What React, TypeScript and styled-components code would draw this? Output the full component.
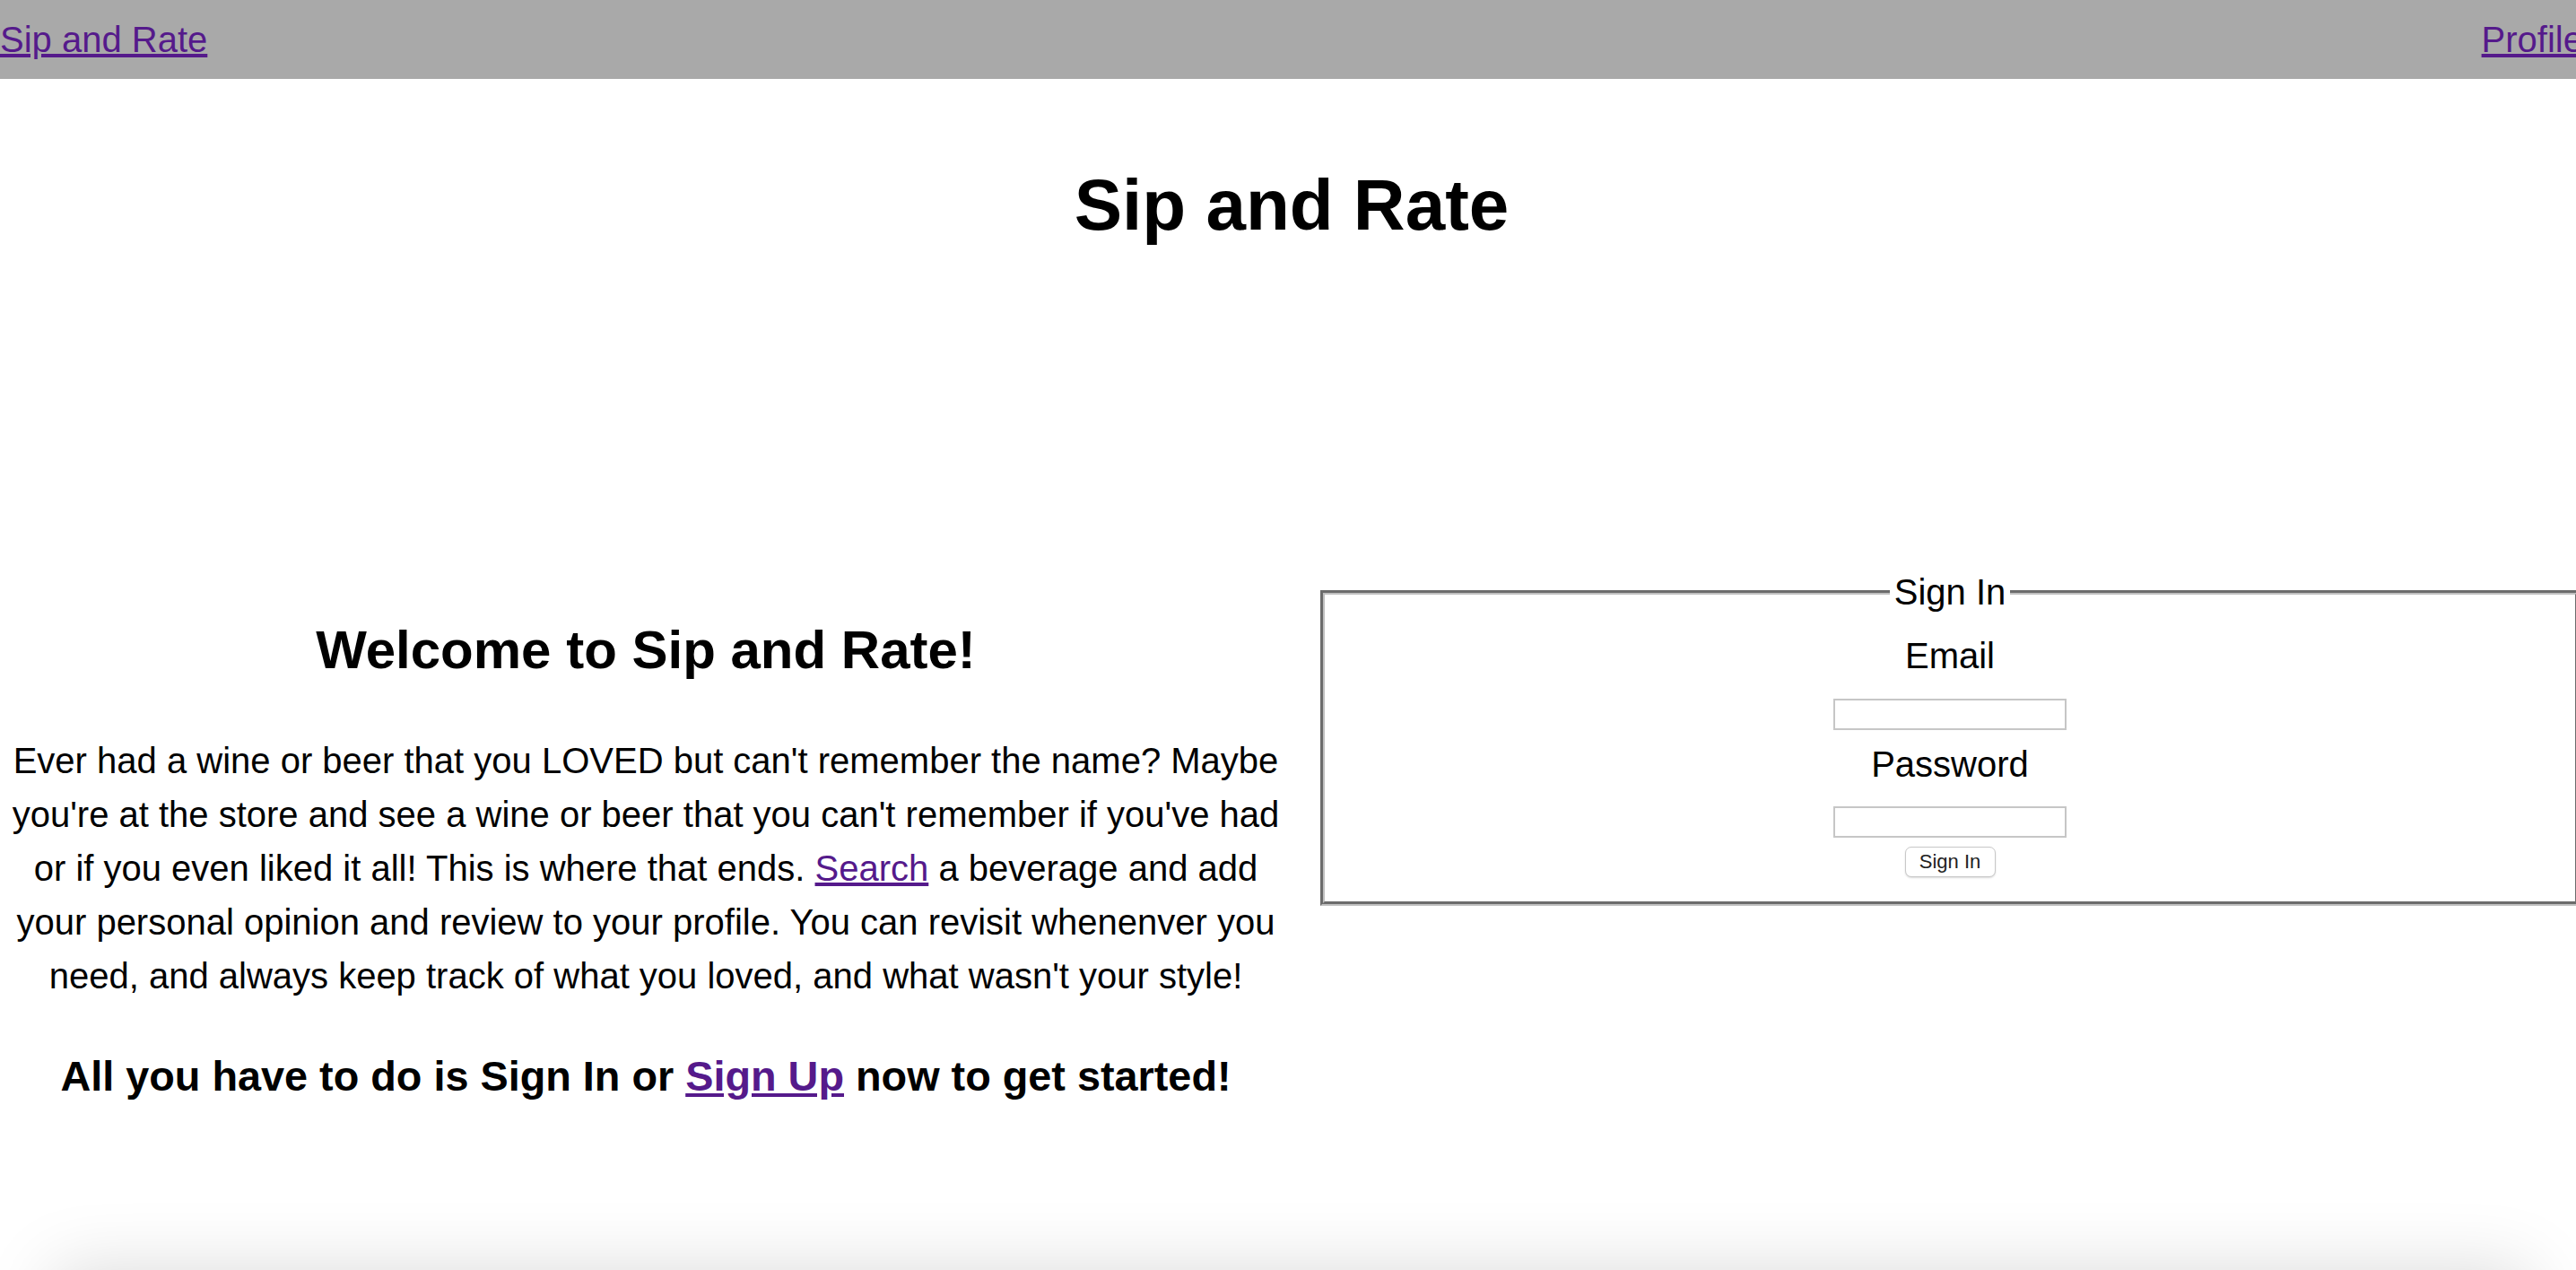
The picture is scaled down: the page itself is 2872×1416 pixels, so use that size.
import React from "react";
import styled, { createGlobalStyle } from "styled-components";

const GlobalStyle = createGlobalStyle`
  html, body {
    margin: 0;
    padding: 0;
    overflow: hidden;
    background: #ffffff;
    font-family: "Liberation Sans", Arial, Helvetica, sans-serif;
    color: #000000;
  }
  * { scrollbar-width: none; }
  ::-webkit-scrollbar { display: none; }
`;

const Page = styled.div`
  width: 2880px;
`;

const Content = styled.main`
  min-height: 100vh;
`;

const TopBar = styled.nav`
  display: flex;
  justify-content: space-between;
  align-items: center;
  height: 88px;
  background: #a9a9a9;
`;

const NavLink = styled.a`
  font-size: 40px;
  line-height: 46px;
  color: #551a8b;
  text-decoration: underline;
`;

const Title = styled.h1`
  margin: 95px 0 0;
  font-size: 80px;
  line-height: 92px;
  font-weight: 700;
  text-align: center;
`;

const Row = styled.section`
  display: grid;
  grid-template-columns: 1440px 1fr;
  align-items: start;
  margin-top: 362px;
`;

const Intro = styled.div`
  padding: 53px 8px 0;
  text-align: center;
`;

const Welcome = styled.h2`
  margin: 0;
  font-size: 60px;
  line-height: 69px;
  font-weight: 700;
`;

const Blurb = styled.p`
  margin: 59px 0 0;
  font-size: 40px;
  line-height: 60px;
`;

const CallToAction = styled.h3`
  margin: 55px 0 0;
  font-size: 46.8px;
  line-height: 54px;
  font-weight: 700;
`;

const InlineLink = styled.a`
  color: #551a8b;
  text-decoration: underline;
`;

const SignInBox = styled.fieldset`
  margin: 0 4px 0 32px;
  padding: 25px 0 27px;
  border: 5px groove rgb(192, 192, 192);
  min-width: 0;
`;

const BoxLegend = styled.legend`
  margin: 0 auto;
  padding: 0 5px;
  font-size: 40px;
  line-height: 46px;
`;

const FormStack = styled.div`
  display: flex;
  flex-direction: column;
  align-items: center;
`;

const FieldLabel = styled.label<{ $gap: number }>`
  display: block;
  margin-top: ${(p) => p.$gap}px;
  font-size: 40px;
  line-height: 46px;
`;

const TextField = styled.input<{ $gap: number }>`
  box-sizing: border-box;
  width: 260px;
  height: 35px;
  margin: ${(p) => p.$gap}px 0 0;
  padding: 0 6px;
  border: 2px solid #c6c6c6;
  background: #ffffff;
  font-family: "Liberation Sans", Arial, sans-serif;
  font-size: 22px;
  outline: none;
`;

const SubmitButton = styled.button`
  box-sizing: border-box;
  width: 101px;
  height: 34px;
  margin-top: 10px;
  padding: 0;
  border: 1px solid #c8c8c8;
  border-radius: 7px;
  background: #ffffff;
  box-shadow: 0 1px 2px rgba(0, 0, 0, 0.15);
  font-family: "Liberation Sans", Arial, sans-serif;
  font-size: 22px;
  color: #222222;
`;

const Shade = styled.footer`
  height: 200px;
  margin: 0 60px;
  background: #ffffff;
  box-shadow: 0 0 80px rgba(0, 0, 0, 0.15);
`;

export default function App() {
  return (
    <Page>
      <GlobalStyle />
      <Content>
        <TopBar>
          <NavLink href="#">Sip and Rate</NavLink>
          <NavLink href="#">Profile</NavLink>
        </TopBar>
        <Title>Sip and Rate</Title>
        <Row>
          <Intro>
            <Welcome>Welcome to Sip and Rate!</Welcome>
            <Blurb>
              Ever had a wine or beer that you LOVED but can't remember the name? Maybe
              you're at the store and see a wine or beer that you can't remember if you've had
              or if you even liked it all! This is where that ends.{" "}
              <InlineLink href="#">Search</InlineLink> a beverage and add your personal
              opinion and review to your profile. You can revisit whenenver you need, and
              always keep track of what you loved, and what wasn't your style!
            </Blurb>
            <CallToAction>
              All you have to do is Sign In or <InlineLink href="#">Sign Up</InlineLink> now
              to get started!
            </CallToAction>
          </Intro>
          <SignInBox>
            <BoxLegend>Sign In</BoxLegend>
            <FormStack>
              <FieldLabel $gap={0} htmlFor="email">Email</FieldLabel>
              <TextField $gap={25} id="email" type="email" />
              <FieldLabel $gap={15} htmlFor="password">Password</FieldLabel>
              <TextField $gap={24} id="password" type="password" />
              <SubmitButton type="button">Sign In</SubmitButton>
            </FormStack>
          </SignInBox>
        </Row>
      </Content>
      <Shade />
    </Page>
  );
}
